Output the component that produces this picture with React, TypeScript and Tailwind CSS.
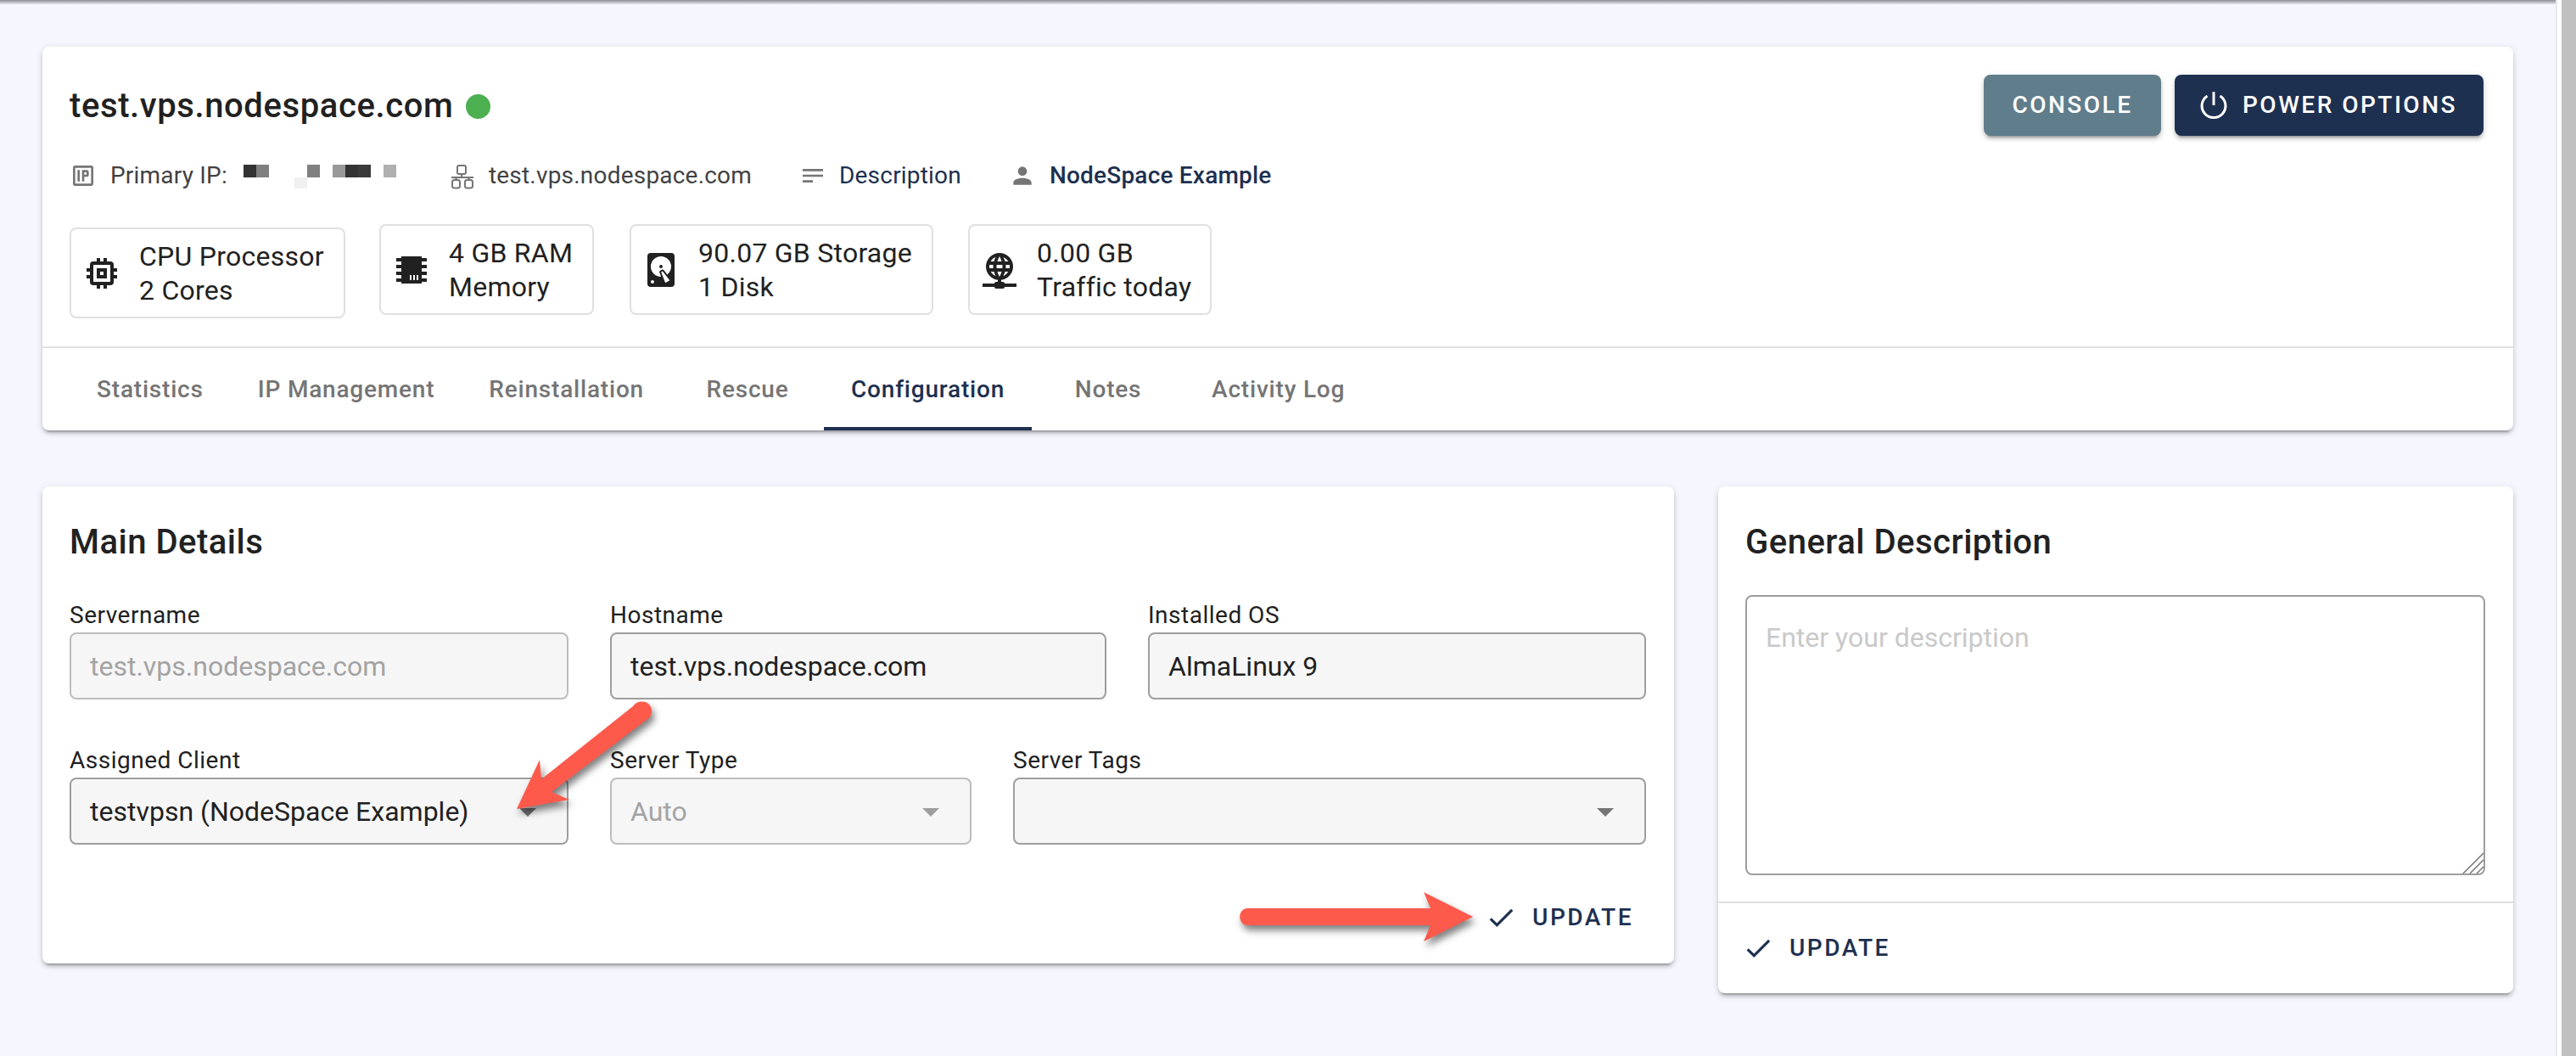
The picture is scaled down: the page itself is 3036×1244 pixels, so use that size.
const CHECK = "M21,7L9,19L3.5,13.5L4.91,12.09L9,16.17L19.59,5.59L21,7Z";
const MENU_DOWN = "M7,10L12,15L17,10H7Z";

const chipIcons = {
    cpu: "M9,9V15H15V9H9M11,11H13V13H11V11M9,3V5H7A2,2 0 0,0 5,7V9H3V11H5V13H3V15H5V17A2,2 0 0,0 7,19H9V21H11V19H13V21H15V19H17A2,2 0 0,0 19,17V15H21V13H19V11H21V9H19V7A2,2 0 0,0 17,5H15V3H13V5H11V3H9M7,7H17V17H7V7Z",
    ram: "M6,4H18V5H21V7H18V9H21V11H18V13H21V15H18V17H21V19H18V20H6V19H3V17H6V15H3V13H6V11H3V9H6V7H3V5H6V4M11,15V18H12V15H11M13,15V18H14V15H13M15,15V18H16V15H15Z",
    disk: "M6,2H18A2,2 0 0,1 20,4V20A2,2 0 0,1 18,22H6A2,2 0 0,1 4,20V4A2,2 0 0,1 6,2M12,4A6,6 0 0,0 6,10C6,13.31 8.69,16 12.1,16L11.22,13.77C10.95,13.29 11.11,12.68 11.59,12.4L12.45,11.9C12.93,11.63 13.54,11.79 13.82,12.27L15.74,14.69C17.12,13.59 18,11.9 18,10A6,6 0 0,0 12,4M12,9A1,1 0 0,1 13,10A1,1 0 0,1 12,11A1,1 0 0,1 11,10A1,1 0 0,1 12,9M7,18A1,1 0 0,0 6,19A1,1 0 0,0 7,20A1,1 0 0,0 8,19A1,1 0 0,0 7,18M12.09,13.27L14.58,19.58L17.17,18.08L12.95,12.77L12.09,13.27Z",
    wan: "M12 2A8 8 0 0 0 4 10C4 14.03 7 17.42 11 17.93V19H10A1 1 0 0 0 9 20H2V22H9A1 1 0 0 0 10 23H14A1 1 0 0 0 15 22H22V20H15A1 1 0 0 0 14 19H13V17.93C17 17.43 20 14.03 20 10A8 8 0 0 0 12 2M12 4C12 4 12.74 5.28 13.26 7H10.74C11.26 5.28 12 4 12 4M9.77 4.43C9.5 4.93 9.09 5.84 8.74 7H6.81C7.5 5.86 8.5 4.93 9.77 4.43M14.23 4.44C15.5 4.94 16.5 5.86 17.19 7H15.26C14.91 5.84 14.5 4.93 14.23 4.44M6.09 9H8.32C8.28 9.33 8.25 9.66 8.25 10C8.25 10.34 8.28 10.67 8.32 11H6.09C6.03 10.67 6 10.34 6 10C6 9.66 6.03 9.33 6.09 9M10.32 9H13.68C13.72 9.33 13.75 9.66 13.75 10C13.75 10.34 13.72 10.67 13.68 11H10.32C10.28 10.67 10.25 10.34 10.25 10C10.25 9.66 10.28 9.33 10.32 9M15.68 9H17.91C17.97 9.33 18 9.66 18 10C18 10.34 17.97 10.67 17.91 11H15.68C15.72 10.67 15.75 10.34 15.75 10C15.75 9.66 15.72 9.33 15.68 9M6.81 13H8.74C9.09 14.16 9.5 15.07 9.77 15.56C8.5 15.06 7.5 14.14 6.81 13M10.74 13H13.26C12.74 14.72 12 16 12 16C12 16 11.26 14.72 10.74 13M15.26 13H17.19C16.5 14.14 15.5 15.07 14.23 15.57C14.5 15.07 14.91 14.16 15.26 13Z",
};

const metaIcons = {
    ip: "M5 3H19A2 2 0 0 1 21 5V19A2 2 0 0 1 19 21H5A2 2 0 0 1 3 19V5A2 2 0 0 1 5 3M5 5V19H19V5H5M7 7H9V17H7V7M11 7H15A2 2 0 0 1 17 9V11A2 2 0 0 1 15 13H13V17H11V7M13 9V11H15V9H13Z",
    text: "M21,6V8H3V6H21M3,18H12V16H3V18M3,13H21V11H3V13Z",
    account: "M12,4A4,4 0 0,1 16,8A4,4 0 0,1 12,12A4,4 0 0,1 8,8A4,4 0 0,1 12,4M12,14C16.42,14 20,15.79 20,18V20H4V18C4,15.79 7.58,14 12,14Z",
};

const chips = [
    { icon: chipIcons.cpu, lines: ["CPU Processor", "2 Cores"], className: "mt-[4px] w-[325px] pl-[12px]" },
    { icon: chipIcons.ram, lines: ["4 GB RAM", "Memory"], className: "w-[253px] pl-[12px]" },
    { icon: chipIcons.disk, lines: ["90.07 GB Storage", "1 Disk"], className: "ml-[2px] w-[358px] pl-[11px]" },
    { icon: chipIcons.wan, lines: ["0.00 GB", "Traffic today"], className: "ml-[1px] w-[287px] pl-[11px]" },
];

const tabs = ["Statistics", "IP Management", "Reinstallation", "Rescue", "Configuration", "Notes", "Activity Log"];

const CARD_SHADOW = "shadow-[0_6px_2px_-4px_rgba(0,0,0,0.2),0_4px_4px_0_rgba(0,0,0,0.14),0_2px_10px_0_rgba(0,0,0,0.12)]";

const Icon = ({ d, className }: { d: string; className: string }) => (
    <svg viewBox="0 0 24 24" className={className} fill="currentColor">
        <path d={d} />
    </svg>
);

const HostIcon = () => (
    <svg viewBox="0 0 32 32" className="mr-[16px] size-[32px] text-[#757575]" fill="none" stroke="currentColor" strokeWidth="2">
        <rect x="11" y="4" width="10" height="10" rx="2" />
        <path d="M16 14V18M4 18H30M9.5 18V21M24.5 18V21" />
        <rect x="5" y="21" width="9" height="9.5" rx="2.5" />
        <rect x="20" y="21" width="9" height="9.5" rx="2.5" />
    </svg>
);

const RedactedIp = () => (
    <div className="ml-[19px] mr-[5px] mt-[8px] grid grid-cols-[repeat(12,15px)] grid-rows-[15px_13px] self-start">
        <span className="bg-[#333333]" />
        <span className="bg-[#808080]" />
        <span />
        <span />
        <span />
        <span className="bg-[#808080]" />
        <span />
        <span className="bg-[#999999]" />
        <span className="bg-[#333333]" />
        <span className="bg-[#3a3a3a]" />
        <span />
        <span className="bg-[#b0b0b0]" />
        <span />
        <span />
        <span />
        <span />
        <span className="bg-[#f0f0f0]" />
    </div>
);

const Field = ({
    label,
    value,
    disabled,
    select,
    className,
}: {
    label: string;
    value?: string;
    disabled?: boolean;
    select?: boolean;
    className: string;
}) => (
    <div className={className}>
        <div className="h-[39px] text-[28px] leading-[37px] tracking-[0.5px] text-[#212121]">{label}</div>
        <div
            className={`flex h-[79px] items-center rounded-lg border-2 bg-[#f6f6f6] pl-[22px] pr-[22px] text-[32px] ${
                disabled ? "border-[#bdbdbd] text-[#a3a3a3]" : "border-[#9e9e9e] text-[#212121]"
            }`}
        >
            <span className="flex-1">{value}</span>
            {select && (
                <Icon d={MENU_DOWN} className={`size-[48px] ${disabled ? "text-[#9e9e9e]" : "text-[#757575]"}`} />
            )}
        </div>
    </div>
);

const UpdateButton = () => (
    <div className="flex items-center text-[28px] font-medium uppercase tracking-[2.5px] text-[#1e3050]">
        <Icon d={CHECK} className="mr-[18px] size-[38px]" />
        Update
    </div>
);

export default function App() {
    return (
        <div className="flex h-[1244px] w-[3036px] overflow-hidden bg-white font-['Roboto',sans-serif]">
            <main className="relative h-full w-[3012px] bg-[#f6f7fe]">
                <div className="h-[5px] bg-linear-to-b from-[#8e8f99] to-[#e6e7ee]" />

                <div className="flex flex-col gap-[66px] pl-[50px] pr-[50px] pt-[50px]">
                    <section className={`rounded-lg bg-white ${CARD_SHADOW}`}>
                        <div className="flex h-[353px] flex-col pl-[32px] pr-[35px]">
                            <div className="flex justify-between pt-[33px]">
                                <div className="flex h-[70px] items-center pt-[4px]">
                                    <h1 className="text-[40px] font-medium leading-none tracking-[0.6px] text-[#212121]">
                                        test.vps.nodespace.com
                                    </h1>
                                    <span className="ml-[15px] size-[29px] rounded-full bg-[#4caf50]" />
                                </div>
                                <div className="flex gap-[16px]">
                                    <button className={`h-[72px] w-[209px] rounded-lg bg-[#607d8b] text-[28px] font-medium uppercase tracking-[2.5px] text-white ${CARD_SHADOW}`}>
                                        Console
                                    </button>
                                    <button className={`flex h-[72px] w-[364px] items-center rounded-lg bg-[#1e3050] pl-[28px] text-[28px] font-medium uppercase tracking-[2.5px] text-white ${CARD_SHADOW}`}>
                                        <svg viewBox="0 0 24 24" className="mr-[16px] size-[36px]" fill="none" stroke="currentColor" strokeWidth="2">
                                            <path d="M12 1.5V12" />
                                            <path d="M7 4.6A9.3 9.3 0 1 0 17 4.6" />
                                        </svg>
                                        Power Options
                                    </button>
                                </div>
                            </div>

                            <div className="mt-[30px] flex h-[34px] items-center gap-[56px] text-[28px] tracking-[0.2px] text-[#424242]">
                                <div className="flex items-center">
                                    <Icon d={metaIcons.ip} className="mr-[16px] size-[32px] text-[#757575]" />
                                    Primary IP:
                                    <RedactedIp />
                                </div>
                                <div className="flex items-center">
                                    <HostIcon />
                                    test.vps.nodespace.com
                                </div>
                                <div className="flex items-center text-[#1e3050]">
                                    <Icon d={metaIcons.text} className="mr-[15px] size-[32px] text-[#757575]" />
                                    Description
                                </div>
                                <div className="flex items-center font-medium text-[#1e3050]">
                                    <Icon d={metaIcons.account} className="mr-[16px] size-[32px] text-[#757575]" />
                                    NodeSpace Example
                                </div>
                            </div>

                            <div className="mt-[40px] flex items-start gap-[40px]">
                                {chips.map((chip) => (
                                    <div
                                        key={chip.lines[0]}
                                        className={`flex h-[107px] items-center rounded-lg border-2 border-[#e0e0e0] ${chip.className}`}
                                    >
                                        <Icon d={chip.icon} className="mr-[20px] size-[48px] shrink-0 text-[#212121]" />
                                        <div className="whitespace-nowrap text-[32px] leading-[40px] tracking-[0.25px] text-[#212121]">
                                            <div>{chip.lines[0]}</div>
                                            <div>{chip.lines[1]}</div>
                                        </div>
                                    </div>
                                ))}
                            </div>
                        </div>

                        <nav className="flex h-[99px] border-t-2 border-[#e0e0e0] pl-[32px]">
                            {tabs.map((tab) => (
                                <div
                                    key={tab}
                                    className={`flex h-full min-w-[180px] items-center justify-center border-b-4 px-[32px] pt-[4px] text-[28px] font-medium tracking-[0.8px] ${
                                        tab === "Configuration"
                                            ? "border-[#1e3050] text-[#1e3050]"
                                            : "border-transparent text-[#757575]"
                                    }`}
                                >
                                    {tab}
                                </div>
                            ))}
                        </nav>
                    </section>

                    <div className="flex items-start gap-[52px]">
                        <section className={`h-[562px] w-[1923px] rounded-lg bg-white px-[32px] pt-[44px] ${CARD_SHADOW}`}>
                            <h2 className="h-[44px] text-[40px] font-medium leading-[44px] tracking-[0.5px] text-[#212121]">
                                Main Details
                            </h2>
                            <div className="mt-[45px] flex gap-[49px]">
                                <Field label="Servername" value="test.vps.nodespace.com" disabled className="w-[588px]" />
                                <Field label="Hostname" value="test.vps.nodespace.com" className="w-[585px]" />
                                <Field label="Installed OS" value="AlmaLinux 9" className="w-[587px]" />
                            </div>
                            <div className="mt-[53px] flex gap-[49px]">
                                <Field label="Assigned Client" value="testvpsn (NodeSpace Example)" select className="w-[588px]" />
                                <Field label="Server Type" value="Auto" select disabled className="w-[426px]" />
                                <Field label="Server Tags" select className="w-[746px]" />
                            </div>
                            <div className="mt-[65px] flex justify-end pr-[16px]">
                                <UpdateButton />
                            </div>
                        </section>

                        <section className={`h-[597px] w-[937px] rounded-lg bg-white ${CARD_SHADOW}`}>
                            <div className="h-[489px] pl-[32px] pt-[44px]">
                                <h2 className="h-[44px] text-[40px] font-medium leading-[44px] tracking-[0.5px] text-[#212121]">
                                    General Description
                                </h2>
                                <div className="relative mt-[40px] h-[330px] w-[872px]">
                                    <textarea
                                        placeholder="Enter your description"
                                        className="block h-full w-full resize-none rounded-lg border-2 border-[#9e9e9e] bg-white px-[22px] py-[26px] text-[32px] leading-[44px] text-[#212121] outline-none placeholder:text-[#c9c9c9]"
                                    />
                                    <svg viewBox="0 0 26 26" className="absolute bottom-[1px] right-[1px] size-[26px]" fill="none" stroke="#777777" strokeWidth="1.5">
                                        <path d="M1 25L25 1M9 25L25 9M17 25L25 17" />
                                    </svg>
                                </div>
                            </div>
                            <div className="flex h-[108px] items-center border-t-2 border-[#e0e0e0] pl-[28px]">
                                <UpdateButton />
                            </div>
                        </section>
                    </div>
                </div>

                {/* annotation arrows drawn over the form */}
                <svg
                    viewBox="0 0 3012 1244"
                    className="pointer-events-none absolute inset-0 h-[1244px] w-[3012px] [filter:drop-shadow(3px_6px_4px_rgba(0,0,0,0.5))]"
                >
                    <path
                        fill="#fd5a4c"
                        d="M746 832C750 826 759 825 764 829C769 833 769 840 766 845L650 933L671 942L609 953L636 895L638 918Z"
                    />
                    <path
                        fill="#fd5a4c"
                        d="M1471 1070H1686L1678 1051L1736 1080L1678 1109L1686 1090H1471C1458 1090 1458 1070 1471 1070Z"
                    />
                </svg>
            </main>
            <div className="h-full w-[7px] border-l-2 border-[#e8e8ee] bg-white" />
            <div className="h-full w-[17px] bg-[#c0c0c0]" />
        </div>
    );
}
